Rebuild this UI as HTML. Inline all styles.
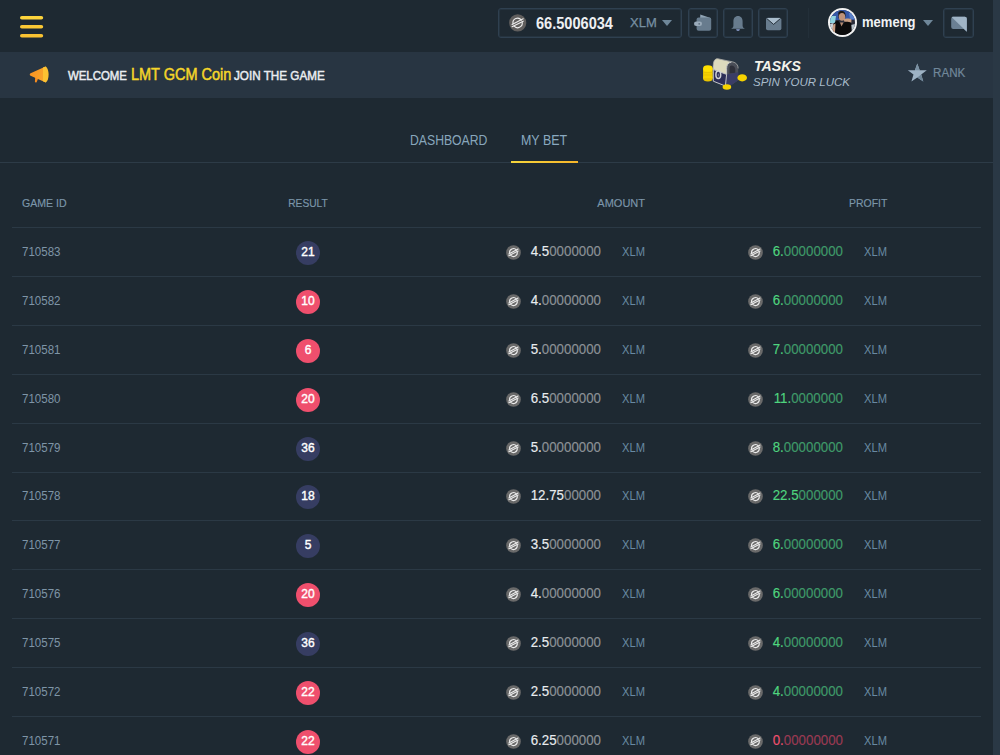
<!DOCTYPE html>
<html><head><meta charset="utf-8">
<style>
*{box-sizing:border-box;margin:0;padding:0}
html,body{width:1000px;height:755px;overflow:hidden;background:#1e2932;font-family:"Liberation Sans",sans-serif}
#hdr{position:absolute;left:0;top:0;width:993px;height:52px;background:#1e2932}
#ban{position:absolute;left:0;top:52px;width:993px;height:46px;background:#283542}
#scroll{position:absolute;left:993px;top:0;width:7px;height:755px;background:#2a3845}

.box{position:absolute;top:8px;height:30px;border:1px solid #2f4050;box-shadow:inset 0 0 0 1px rgba(47,64,80,.45);border-radius:3px}
.t{position:absolute;white-space:nowrap;line-height:1}
.tabline{position:absolute;left:0;top:162px;width:993px;height:1px;background:#2d3b47}
.rowline{position:absolute;left:12px;width:969px;height:1px;background:#2b3945}
.th{position:absolute;top:198px;font-size:11px;color:#7c96aa;line-height:1;white-space:nowrap;-webkit-text-stroke:0.15px #7c96aa}
.gid{position:absolute;left:22px;font-size:12px;color:#7e95a7;line-height:1;transform:scaleX(.96);transform-origin:0 0}
.ball{position:absolute;left:296px;width:24px;height:24px;border-radius:50%;color:#fff;font-size:12px;-webkit-text-stroke:0.4px #fff;text-align:center;line-height:22px}
.b{background:#363d62}.r{background:#ef4f6d}
.coin{position:absolute;width:15px;height:15px}
.coin svg{display:block}
.num{position:absolute;font-size:14px;line-height:1;white-space:nowrap;text-align:right;transform:scaleX(.95);transform-origin:100% 0;-webkit-text-stroke:0.15px currentColor}
.amt{right:399px}
.prf{right:157px}
.amt .hi{color:#e9ecef}.amt .lo{color:#8c9196}
.g .hi{color:#4fd57f}.g .lo{color:#3f9a69}
.rd .hi{color:#f0506e}.rd .lo{color:#9a3a52}
.xlm{position:absolute;font-size:12px;color:#6889a2;line-height:1;transform:scaleX(.93);transform-origin:0 0}
.abs{position:absolute}
.t{position:absolute;white-space:nowrap;line-height:1;transform-origin:0 0}
.tri{position:absolute;width:0;height:0;border-left:5px solid transparent;border-right:5px solid transparent;border-top:6px solid #6f8799}

</style></head><body>
<div id="hdr"></div>
<div id="ban"></div>
<div id="scroll"></div>
<svg class="abs" style="left:0;top:0" width="60" height="52" viewBox="0 0 60 52">
<defs><linearGradient id="bg1" x1="0" y1="0" x2="0" y2="1"><stop offset="0" stop-color="#ffdc45"/><stop offset="1" stop-color="#f6b92b"/></linearGradient></defs>
<g stroke="url(#bg1)" stroke-width="3.6" stroke-linecap="round">
<path d="M21.8 17.7H41.4" stroke="#fdd43c"/><path d="M21.8 26.7H41.4" stroke="#fcc935"/><path d="M21.8 35.8H41.4" stroke="#f9c232"/></g></svg>

<!-- balance box -->
<div class="box" style="left:498px;width:184px"></div>
<div class="abs" style="left:509px;top:14px;width:18px;height:18px">
<svg width="18" height="18" viewBox="0 0 18 18"><circle cx="8.7" cy="8.9" r="8.6" fill="#605e5d"/>
<g fill="none" stroke="#ededed" stroke-width="1.15" stroke-linecap="round"><path d="M4 9.6A4.6 4.6 0 0 1 12.3 6.2"/><path d="M13.2 8.4A4.6 4.6 0 0 1 5 11.9"/><path d="M3.1 10.6 14.2 4.8"/><path d="M3.1 12.7 14.2 7.2"/></g></svg></div>
<div class="t" style="left:536px;top:15.5px;font-size:16px;font-weight:bold;color:#eef0f2;transform:scaleX(.91)">66.5006034</div>
<div class="t" style="left:630px;top:16px;font-size:13px;color:#7790a3;-webkit-text-stroke:0.25px #7790a3">XLM</div>
<div class="tri" style="left:662px;top:20px"></div>

<!-- icon buttons -->
<div class="box" style="left:688px;width:30px"></div>
<div class="box" style="left:723px;width:30px"></div>
<div class="box" style="left:758px;width:30px"></div>
<svg class="abs" style="left:688px;top:8px" width="30" height="30" viewBox="0 0 30 30">
<path d="M12.3 6.4 22.6 9.9 22.8 13 12 13Z" fill="#91a4b5"/>
<rect x="8.6" y="9.5" width="14.6" height="13.3" rx="2" fill="#687c8e"/>
<rect x="6" y="13.5" width="8" height="4.6" rx="2.3" fill="#9aabba"/>
<circle cx="11.2" cy="15.8" r="0.9" fill="#5b6d7d"/>
</svg>
<svg class="abs" style="left:723px;top:8px" width="30" height="30" viewBox="0 0 30 30">
<path d="M15 8.1c-3 0-4.6 2.4-4.6 5.3v4.3c0 1.4-1.2 2.6-2.3 3.1h13.8c-1.1-.5-2.3-1.7-2.3-3.1v-4.3c0-2.9-1.6-5.3-4.6-5.3Z" fill="#687c8e"/>
<path d="M13.2 21.3h3.6c0 1-0.8 1.6-1.8 1.6s-1.8-.6-1.8-1.6Z" fill="#8e9fd0"/>
</svg>
<svg class="abs" style="left:758px;top:8px" width="30" height="30" viewBox="0 0 30 30">
<rect x="8" y="9.8" width="15.4" height="12.4" rx="1.8" fill="#687c8e"/>
<path d="M8.3 10 22.9 10 15.6 16.2Z" fill="#a9bccc"/>
<path d="M8.6 10.4 15.6 16.4 22.6 10.4" fill="none" stroke="#1e2932" stroke-width="0.9"/>
</svg>

<div class="abs" style="left:808px;top:8px;width:1px;height:30px;background:#232f39"></div>

<!-- avatar -->
<div class="abs" style="left:828px;top:8px;width:29px;height:29px;border-radius:50%;background:#f2f2f2"></div>
<svg class="abs" style="left:830px;top:10px" width="25" height="25" viewBox="0 0 25 25">
<defs><clipPath id="av"><circle cx="12.5" cy="12.5" r="12.5"/></clipPath></defs>
<g clip-path="url(#av)">
<rect width="25" height="25" fill="#2a2d3a"/>
<rect y="0" width="25" height="10" fill="#3558a8"/>
<path d="M0 6H6L5 13H0Z" fill="#8fd3e0"/>
<path d="M19 3H25V9L20 9Z" fill="#5a80c8"/>
<path d="M0 14 3.5 13 3 25H0Z" fill="#c9d3da"/>
<path d="M21 15 25 14V25H22Z" fill="#b9c4cc"/>
<path d="M8.3 2.5C9.5 1 11 .8 12.5 1 14.5 1.3 15.6 3 15.5 5.5L15 8.5 8.5 8.3Z" fill="#1f1915"/>
<ellipse cx="12" cy="6.8" rx="3.2" ry="3.9" fill="#c09379"/>
<path d="M13.5 9.5C15.5 8.3 19.5 8 21.5 9.5L21.3 12.8C19 11.8 17 12 15 12.5Z" fill="#c99f83"/>
<path d="M2.2 25 3.4 14.5C4.6 12.2 6.3 11 8.3 10.8L11.5 15.5 15 11.8C17 11.6 19.5 11.8 21.2 13L21.8 25Z" fill="#0b0b0c"/>
<path d="M3.4 14.5C2.3 17 2 20.5 2.8 23.5L5 22.5 5.5 13.5Z" fill="#c89d83"/>
<path d="M10 12.5 11.5 16.5 13.5 12.5Z" fill="#b48a70"/>
</g></svg>
<div class="t" style="left:862px;top:14px;font-size:15.5px;font-weight:bold;color:#f0f2f4;transform:scaleX(.84)">memeng</div>
<div class="tri" style="left:923px;top:20px"></div>

<div class="box" style="left:943px;width:31px"></div>
<svg class="abs" style="left:943px;top:8px" width="31" height="30" viewBox="0 0 31 30">
<path d="M10.2 8.7h11.6a2 2 0 0 1 2 2V23.7L21 21H10.2a2 2 0 0 1-2-2V10.7a2 2 0 0 1 2-2Z" fill="#6b8094"/>
<path d="M8.8 9.2C9.2 8.8 9.6 8.7 10.2 8.7h11.6a2 2 0 0 1 2 2V23.7Z" fill="#a0b4c6"/>
</svg>

<!-- banner -->
<svg class="abs" style="left:26px;top:62px" width="28" height="26" viewBox="0 0 28 26">
<defs><linearGradient id="mg" x1="0" y1="0" x2="1" y2="0.3"><stop offset="0" stop-color="#f9901f"/><stop offset="1" stop-color="#f8a52c"/></linearGradient></defs>
<path d="M9.2 15 12.2 16.2 10.7 20C10.4 20.9 8.9 20.8 8.9 19.8Z" fill="#f78c1f"/>
<path d="M4.6 11.3 19.6 4.4 19.8 20.6 4.6 13.8C3.5 13.2 3.5 11.8 4.6 11.3Z" fill="url(#mg)"/>
<path d="M17 5.6 19.6 4.4C21.6 5.5 22.6 9.3 22.6 12.6 22.6 16 21.6 19.6 19.8 20.6L17 19.3Z" fill="#fcc232"/>
</svg>
<div class="t" style="left:68px;top:70px;font-size:12px;color:#eaedf0;-webkit-text-stroke:0.45px #eaedf0;transform:scaleX(.95)">WELCOME</div>
<div class="t" style="left:131px;top:67px;font-size:16px;color:#f5d629;-webkit-text-stroke:0.5px #f5d629;transform:scaleX(.905)">LMT GCM Coin</div>
<div class="t" style="left:234px;top:70px;font-size:12px;color:#eaedf0;-webkit-text-stroke:0.45px #eaedf0;transform:scaleX(.975)">JOIN THE GAME</div>

<!-- chest -->
<svg class="abs" style="left:698px;top:54px" width="54" height="40" viewBox="0 0 54 40">
<g fill="#f6d200">
<ellipse cx="9.9" cy="24.2" rx="4.8" ry="3.2" fill="#e9c400"/>
<rect x="5.1" y="14.5" width="9.6" height="9.7"/>
<ellipse cx="9.9" cy="14.5" rx="4.8" ry="3.2" fill="#ffe000"/>
<path d="M5.1 18.6h9.6M5.1 21h9.6" stroke="#e2bd00" stroke-width="0.7"/>
</g>
<path d="M15.4 11C15.4 6.3 17.5 4.2 20 4.3L34.8 7.9C38 8.6 40.2 11 40.2 14.4V26.2L34.2 30.6 27.4 32 15.1 27.2Z" fill="#4a4e58"/>
<path d="M28.6 20.4 40.2 18.3V26.2L34.2 30.6 27.4 32Z" fill="#3a3d66"/>
<path d="M31.5 19.6V14C31.5 12 33 11.2 34.6 11.7 36.3 12.3 37.3 13.6 37.3 15.6V18.8Z" fill="#2e303a"/>
<path d="M15.3 11.3C15.3 6.5 17.4 4.6 19.8 4.8L33.5 8C30 8.8 28.6 11 28.6 14.5V20.4L15.5 15.6Z" fill="#dcdabd"/>
<path d="M15.5 15.6 28.6 20.4 27.4 32 15.1 27.2Z" fill="#2c2e57"/>
<path d="M15.3 11.3V27.2L27.4 32 28.6 20.4 15.5 15.6M28.6 20.4V14.5C28.6 11 30 8.8 33.5 8" fill="none" stroke="#c3c5c8" stroke-width="1"/>
<path d="M15.3 11.3C15.3 6.5 17.4 4.6 19.8 4.8L34.8 7.9C38 8.6 40.2 11 40.2 14.4" fill="none" stroke="#a9aba8" stroke-width="0.8"/>
<ellipse cx="20.3" cy="20.8" rx="2.4" ry="3.7" fill="#2c2e57" stroke="#d2d4d8" stroke-width="1.5"/>
<ellipse cx="20.4" cy="21" rx="0.7" ry="1.6" fill="#6e7090"/>
<ellipse cx="44.2" cy="23.8" rx="4.8" ry="3.6" fill="#f6d200"/>
<ellipse cx="28.9" cy="33" rx="4.3" ry="2.8" fill="#f6d200"/>
</svg>
<div class="t" style="left:754px;top:59px;font-size:14px;font-weight:bold;font-style:italic;color:#f3f2ea;transform:scaleX(1.01)">TASKS</div>
<div class="t" style="left:753px;top:77px;font-size:11.5px;font-style:italic;color:#a9bccc">SPIN YOUR LUCK</div>

<svg class="abs" style="left:906px;top:62px" width="22" height="21" viewBox="0 0 22 21">
<path d="M11.3 1.5 13.7 8.2 20.8 8.3 15.2 12.6 17.3 19.4 11.3 15.4 5.4 19.4 7.5 12.6 1.8 8.3 8.9 8.2Z" fill="#9eb3c5"/>
<path d="M11.3 1.5 13.7 8.2 8.9 8.2Z" fill="#7a90a2"/><path d="M11.3 15.4 17.3 19.4 15.2 12.6 17.5 10.8Z" fill="#6f8698"/>
</svg>
<div class="t" style="left:932.5px;top:67px;font-size:12px;color:#71889a;-webkit-text-stroke:0.2px #71889a;transform:scaleX(.97)">RANK</div>

<!-- tabs -->
<div class="tabline"></div>
<div class="t" style="left:409.5px;top:133px;font-size:14.3px;color:#88a6bc;transform:scaleX(.855)">DASHBOARD</div>
<div class="t" style="left:521px;top:133px;font-size:14.3px;color:#8aa9c0;transform:scaleX(.87)">MY BET</div>
<div class="abs" style="left:511px;top:161px;width:67px;height:2px;background:linear-gradient(90deg,#f6d53c,#f6b52a)"></div>

<div class="th" style="left:22px;transform:scaleX(.96);transform-origin:0 0">GAME ID</div>
<div class="th" style="left:268px;width:80px;text-align:center;transform:scaleX(.93)">RESULT</div>
<div class="th" style="right:355px">AMOUNT</div>
<div class="th" style="right:113px;transform:scaleX(.95);transform-origin:100% 0">PROFIT</div>

<div class="rowline" style="top:227px"></div>
<div class="gid" style="top:246px">710583</div>
<div class="ball b" style="top:240.5px">21</div>
<div class="coin" style="left:506px;top:245px"><svg width="15" height="15" viewBox="0 0 18 18"><circle cx="9" cy="9" r="8.8" fill="#6a6a6a"/><g fill="none" stroke="#ececec" stroke-width="1.3" stroke-linecap="round"><path d="M4.3 9.7A4.6 4.6 0 0 1 12.6 6.3"/><path d="M13.5 8.5A4.6 4.6 0 0 1 5.3 12"/><path d="M3.4 10.7 14.5 4.9"/><path d="M3.4 12.8 14.5 7.3"/></g></svg></div>
<div class="num amt" style="top:244px"><span class="hi">4.5</span><span class="lo">0000000</span></div>
<div class="xlm" style="left:621.5px;top:246px">XLM</div>
<div class="coin" style="left:748px;top:245px"><svg width="15" height="15" viewBox="0 0 18 18"><circle cx="9" cy="9" r="8.8" fill="#6a6a6a"/><g fill="none" stroke="#ececec" stroke-width="1.3" stroke-linecap="round"><path d="M4.3 9.7A4.6 4.6 0 0 1 12.6 6.3"/><path d="M13.5 8.5A4.6 4.6 0 0 1 5.3 12"/><path d="M3.4 10.7 14.5 4.9"/><path d="M3.4 12.8 14.5 7.3"/></g></svg></div>
<div class="num prf g" style="top:244px"><span class="hi">6.</span><span class="lo">00000000</span></div>
<div class="xlm" style="left:863.5px;top:246px">XLM</div>
<div class="rowline" style="top:276px"></div>
<div class="gid" style="top:295px">710582</div>
<div class="ball r" style="top:289.5px">10</div>
<div class="coin" style="left:506px;top:294px"><svg width="15" height="15" viewBox="0 0 18 18"><circle cx="9" cy="9" r="8.8" fill="#6a6a6a"/><g fill="none" stroke="#ececec" stroke-width="1.3" stroke-linecap="round"><path d="M4.3 9.7A4.6 4.6 0 0 1 12.6 6.3"/><path d="M13.5 8.5A4.6 4.6 0 0 1 5.3 12"/><path d="M3.4 10.7 14.5 4.9"/><path d="M3.4 12.8 14.5 7.3"/></g></svg></div>
<div class="num amt" style="top:293px"><span class="hi">4.</span><span class="lo">00000000</span></div>
<div class="xlm" style="left:621.5px;top:295px">XLM</div>
<div class="coin" style="left:748px;top:294px"><svg width="15" height="15" viewBox="0 0 18 18"><circle cx="9" cy="9" r="8.8" fill="#6a6a6a"/><g fill="none" stroke="#ececec" stroke-width="1.3" stroke-linecap="round"><path d="M4.3 9.7A4.6 4.6 0 0 1 12.6 6.3"/><path d="M13.5 8.5A4.6 4.6 0 0 1 5.3 12"/><path d="M3.4 10.7 14.5 4.9"/><path d="M3.4 12.8 14.5 7.3"/></g></svg></div>
<div class="num prf g" style="top:293px"><span class="hi">6.</span><span class="lo">00000000</span></div>
<div class="xlm" style="left:863.5px;top:295px">XLM</div>
<div class="rowline" style="top:325px"></div>
<div class="gid" style="top:344px">710581</div>
<div class="ball r" style="top:338.5px">6</div>
<div class="coin" style="left:506px;top:343px"><svg width="15" height="15" viewBox="0 0 18 18"><circle cx="9" cy="9" r="8.8" fill="#6a6a6a"/><g fill="none" stroke="#ececec" stroke-width="1.3" stroke-linecap="round"><path d="M4.3 9.7A4.6 4.6 0 0 1 12.6 6.3"/><path d="M13.5 8.5A4.6 4.6 0 0 1 5.3 12"/><path d="M3.4 10.7 14.5 4.9"/><path d="M3.4 12.8 14.5 7.3"/></g></svg></div>
<div class="num amt" style="top:342px"><span class="hi">5.</span><span class="lo">00000000</span></div>
<div class="xlm" style="left:621.5px;top:344px">XLM</div>
<div class="coin" style="left:748px;top:343px"><svg width="15" height="15" viewBox="0 0 18 18"><circle cx="9" cy="9" r="8.8" fill="#6a6a6a"/><g fill="none" stroke="#ececec" stroke-width="1.3" stroke-linecap="round"><path d="M4.3 9.7A4.6 4.6 0 0 1 12.6 6.3"/><path d="M13.5 8.5A4.6 4.6 0 0 1 5.3 12"/><path d="M3.4 10.7 14.5 4.9"/><path d="M3.4 12.8 14.5 7.3"/></g></svg></div>
<div class="num prf g" style="top:342px"><span class="hi">7.</span><span class="lo">00000000</span></div>
<div class="xlm" style="left:863.5px;top:344px">XLM</div>
<div class="rowline" style="top:374px"></div>
<div class="gid" style="top:393px">710580</div>
<div class="ball r" style="top:387.5px">20</div>
<div class="coin" style="left:506px;top:392px"><svg width="15" height="15" viewBox="0 0 18 18"><circle cx="9" cy="9" r="8.8" fill="#6a6a6a"/><g fill="none" stroke="#ececec" stroke-width="1.3" stroke-linecap="round"><path d="M4.3 9.7A4.6 4.6 0 0 1 12.6 6.3"/><path d="M13.5 8.5A4.6 4.6 0 0 1 5.3 12"/><path d="M3.4 10.7 14.5 4.9"/><path d="M3.4 12.8 14.5 7.3"/></g></svg></div>
<div class="num amt" style="top:391px"><span class="hi">6.5</span><span class="lo">0000000</span></div>
<div class="xlm" style="left:621.5px;top:393px">XLM</div>
<div class="coin" style="left:748px;top:392px"><svg width="15" height="15" viewBox="0 0 18 18"><circle cx="9" cy="9" r="8.8" fill="#6a6a6a"/><g fill="none" stroke="#ececec" stroke-width="1.3" stroke-linecap="round"><path d="M4.3 9.7A4.6 4.6 0 0 1 12.6 6.3"/><path d="M13.5 8.5A4.6 4.6 0 0 1 5.3 12"/><path d="M3.4 10.7 14.5 4.9"/><path d="M3.4 12.8 14.5 7.3"/></g></svg></div>
<div class="num prf g" style="top:391px"><span class="hi">11.</span><span class="lo">0000000</span></div>
<div class="xlm" style="left:863.5px;top:393px">XLM</div>
<div class="rowline" style="top:423px"></div>
<div class="gid" style="top:442px">710579</div>
<div class="ball b" style="top:436.5px">36</div>
<div class="coin" style="left:506px;top:441px"><svg width="15" height="15" viewBox="0 0 18 18"><circle cx="9" cy="9" r="8.8" fill="#6a6a6a"/><g fill="none" stroke="#ececec" stroke-width="1.3" stroke-linecap="round"><path d="M4.3 9.7A4.6 4.6 0 0 1 12.6 6.3"/><path d="M13.5 8.5A4.6 4.6 0 0 1 5.3 12"/><path d="M3.4 10.7 14.5 4.9"/><path d="M3.4 12.8 14.5 7.3"/></g></svg></div>
<div class="num amt" style="top:440px"><span class="hi">5.</span><span class="lo">00000000</span></div>
<div class="xlm" style="left:621.5px;top:442px">XLM</div>
<div class="coin" style="left:748px;top:441px"><svg width="15" height="15" viewBox="0 0 18 18"><circle cx="9" cy="9" r="8.8" fill="#6a6a6a"/><g fill="none" stroke="#ececec" stroke-width="1.3" stroke-linecap="round"><path d="M4.3 9.7A4.6 4.6 0 0 1 12.6 6.3"/><path d="M13.5 8.5A4.6 4.6 0 0 1 5.3 12"/><path d="M3.4 10.7 14.5 4.9"/><path d="M3.4 12.8 14.5 7.3"/></g></svg></div>
<div class="num prf g" style="top:440px"><span class="hi">8.</span><span class="lo">00000000</span></div>
<div class="xlm" style="left:863.5px;top:442px">XLM</div>
<div class="rowline" style="top:472px"></div>
<div class="gid" style="top:490px">710578</div>
<div class="ball b" style="top:484.5px">18</div>
<div class="coin" style="left:506px;top:489px"><svg width="15" height="15" viewBox="0 0 18 18"><circle cx="9" cy="9" r="8.8" fill="#6a6a6a"/><g fill="none" stroke="#ececec" stroke-width="1.3" stroke-linecap="round"><path d="M4.3 9.7A4.6 4.6 0 0 1 12.6 6.3"/><path d="M13.5 8.5A4.6 4.6 0 0 1 5.3 12"/><path d="M3.4 10.7 14.5 4.9"/><path d="M3.4 12.8 14.5 7.3"/></g></svg></div>
<div class="num amt" style="top:488px"><span class="hi">12.75</span><span class="lo">00000</span></div>
<div class="xlm" style="left:621.5px;top:490px">XLM</div>
<div class="coin" style="left:748px;top:489px"><svg width="15" height="15" viewBox="0 0 18 18"><circle cx="9" cy="9" r="8.8" fill="#6a6a6a"/><g fill="none" stroke="#ececec" stroke-width="1.3" stroke-linecap="round"><path d="M4.3 9.7A4.6 4.6 0 0 1 12.6 6.3"/><path d="M13.5 8.5A4.6 4.6 0 0 1 5.3 12"/><path d="M3.4 10.7 14.5 4.9"/><path d="M3.4 12.8 14.5 7.3"/></g></svg></div>
<div class="num prf g" style="top:488px"><span class="hi">22.5</span><span class="lo">000000</span></div>
<div class="xlm" style="left:863.5px;top:490px">XLM</div>
<div class="rowline" style="top:520px"></div>
<div class="gid" style="top:539px">710577</div>
<div class="ball b" style="top:533.5px">5</div>
<div class="coin" style="left:506px;top:538px"><svg width="15" height="15" viewBox="0 0 18 18"><circle cx="9" cy="9" r="8.8" fill="#6a6a6a"/><g fill="none" stroke="#ececec" stroke-width="1.3" stroke-linecap="round"><path d="M4.3 9.7A4.6 4.6 0 0 1 12.6 6.3"/><path d="M13.5 8.5A4.6 4.6 0 0 1 5.3 12"/><path d="M3.4 10.7 14.5 4.9"/><path d="M3.4 12.8 14.5 7.3"/></g></svg></div>
<div class="num amt" style="top:537px"><span class="hi">3.5</span><span class="lo">0000000</span></div>
<div class="xlm" style="left:621.5px;top:539px">XLM</div>
<div class="coin" style="left:748px;top:538px"><svg width="15" height="15" viewBox="0 0 18 18"><circle cx="9" cy="9" r="8.8" fill="#6a6a6a"/><g fill="none" stroke="#ececec" stroke-width="1.3" stroke-linecap="round"><path d="M4.3 9.7A4.6 4.6 0 0 1 12.6 6.3"/><path d="M13.5 8.5A4.6 4.6 0 0 1 5.3 12"/><path d="M3.4 10.7 14.5 4.9"/><path d="M3.4 12.8 14.5 7.3"/></g></svg></div>
<div class="num prf g" style="top:537px"><span class="hi">6.</span><span class="lo">00000000</span></div>
<div class="xlm" style="left:863.5px;top:539px">XLM</div>
<div class="rowline" style="top:569px"></div>
<div class="gid" style="top:588px">710576</div>
<div class="ball r" style="top:582.5px">20</div>
<div class="coin" style="left:506px;top:587px"><svg width="15" height="15" viewBox="0 0 18 18"><circle cx="9" cy="9" r="8.8" fill="#6a6a6a"/><g fill="none" stroke="#ececec" stroke-width="1.3" stroke-linecap="round"><path d="M4.3 9.7A4.6 4.6 0 0 1 12.6 6.3"/><path d="M13.5 8.5A4.6 4.6 0 0 1 5.3 12"/><path d="M3.4 10.7 14.5 4.9"/><path d="M3.4 12.8 14.5 7.3"/></g></svg></div>
<div class="num amt" style="top:586px"><span class="hi">4.</span><span class="lo">00000000</span></div>
<div class="xlm" style="left:621.5px;top:588px">XLM</div>
<div class="coin" style="left:748px;top:587px"><svg width="15" height="15" viewBox="0 0 18 18"><circle cx="9" cy="9" r="8.8" fill="#6a6a6a"/><g fill="none" stroke="#ececec" stroke-width="1.3" stroke-linecap="round"><path d="M4.3 9.7A4.6 4.6 0 0 1 12.6 6.3"/><path d="M13.5 8.5A4.6 4.6 0 0 1 5.3 12"/><path d="M3.4 10.7 14.5 4.9"/><path d="M3.4 12.8 14.5 7.3"/></g></svg></div>
<div class="num prf g" style="top:586px"><span class="hi">6.</span><span class="lo">00000000</span></div>
<div class="xlm" style="left:863.5px;top:588px">XLM</div>
<div class="rowline" style="top:618px"></div>
<div class="gid" style="top:637px">710575</div>
<div class="ball b" style="top:631.5px">36</div>
<div class="coin" style="left:506px;top:636px"><svg width="15" height="15" viewBox="0 0 18 18"><circle cx="9" cy="9" r="8.8" fill="#6a6a6a"/><g fill="none" stroke="#ececec" stroke-width="1.3" stroke-linecap="round"><path d="M4.3 9.7A4.6 4.6 0 0 1 12.6 6.3"/><path d="M13.5 8.5A4.6 4.6 0 0 1 5.3 12"/><path d="M3.4 10.7 14.5 4.9"/><path d="M3.4 12.8 14.5 7.3"/></g></svg></div>
<div class="num amt" style="top:635px"><span class="hi">2.5</span><span class="lo">0000000</span></div>
<div class="xlm" style="left:621.5px;top:637px">XLM</div>
<div class="coin" style="left:748px;top:636px"><svg width="15" height="15" viewBox="0 0 18 18"><circle cx="9" cy="9" r="8.8" fill="#6a6a6a"/><g fill="none" stroke="#ececec" stroke-width="1.3" stroke-linecap="round"><path d="M4.3 9.7A4.6 4.6 0 0 1 12.6 6.3"/><path d="M13.5 8.5A4.6 4.6 0 0 1 5.3 12"/><path d="M3.4 10.7 14.5 4.9"/><path d="M3.4 12.8 14.5 7.3"/></g></svg></div>
<div class="num prf g" style="top:635px"><span class="hi">4.</span><span class="lo">00000000</span></div>
<div class="xlm" style="left:863.5px;top:637px">XLM</div>
<div class="rowline" style="top:667px"></div>
<div class="gid" style="top:686px">710572</div>
<div class="ball r" style="top:680.5px">22</div>
<div class="coin" style="left:506px;top:685px"><svg width="15" height="15" viewBox="0 0 18 18"><circle cx="9" cy="9" r="8.8" fill="#6a6a6a"/><g fill="none" stroke="#ececec" stroke-width="1.3" stroke-linecap="round"><path d="M4.3 9.7A4.6 4.6 0 0 1 12.6 6.3"/><path d="M13.5 8.5A4.6 4.6 0 0 1 5.3 12"/><path d="M3.4 10.7 14.5 4.9"/><path d="M3.4 12.8 14.5 7.3"/></g></svg></div>
<div class="num amt" style="top:684px"><span class="hi">2.5</span><span class="lo">0000000</span></div>
<div class="xlm" style="left:621.5px;top:686px">XLM</div>
<div class="coin" style="left:748px;top:685px"><svg width="15" height="15" viewBox="0 0 18 18"><circle cx="9" cy="9" r="8.8" fill="#6a6a6a"/><g fill="none" stroke="#ececec" stroke-width="1.3" stroke-linecap="round"><path d="M4.3 9.7A4.6 4.6 0 0 1 12.6 6.3"/><path d="M13.5 8.5A4.6 4.6 0 0 1 5.3 12"/><path d="M3.4 10.7 14.5 4.9"/><path d="M3.4 12.8 14.5 7.3"/></g></svg></div>
<div class="num prf g" style="top:684px"><span class="hi">4.</span><span class="lo">00000000</span></div>
<div class="xlm" style="left:863.5px;top:686px">XLM</div>
<div class="rowline" style="top:716px"></div>
<div class="gid" style="top:735px">710571</div>
<div class="ball r" style="top:729.5px">22</div>
<div class="coin" style="left:506px;top:734px"><svg width="15" height="15" viewBox="0 0 18 18"><circle cx="9" cy="9" r="8.8" fill="#6a6a6a"/><g fill="none" stroke="#ececec" stroke-width="1.3" stroke-linecap="round"><path d="M4.3 9.7A4.6 4.6 0 0 1 12.6 6.3"/><path d="M13.5 8.5A4.6 4.6 0 0 1 5.3 12"/><path d="M3.4 10.7 14.5 4.9"/><path d="M3.4 12.8 14.5 7.3"/></g></svg></div>
<div class="num amt" style="top:733px"><span class="hi">6.25</span><span class="lo">000000</span></div>
<div class="xlm" style="left:621.5px;top:735px">XLM</div>
<div class="coin" style="left:748px;top:734px"><svg width="15" height="15" viewBox="0 0 18 18"><circle cx="9" cy="9" r="8.8" fill="#6a6a6a"/><g fill="none" stroke="#ececec" stroke-width="1.3" stroke-linecap="round"><path d="M4.3 9.7A4.6 4.6 0 0 1 12.6 6.3"/><path d="M13.5 8.5A4.6 4.6 0 0 1 5.3 12"/><path d="M3.4 10.7 14.5 4.9"/><path d="M3.4 12.8 14.5 7.3"/></g></svg></div>
<div class="num prf rd" style="top:733px"><span class="hi">0.</span><span class="lo">00000000</span></div>
<div class="xlm" style="left:863.5px;top:735px">XLM</div>
</body></html>
